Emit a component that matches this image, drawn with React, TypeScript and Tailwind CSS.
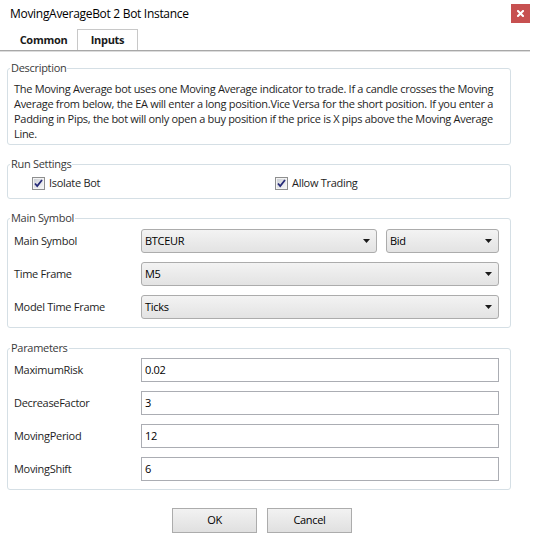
import type { ReactNode } from "react";

const font = { fontFamily: "'Open Sans', 'Noto Sans', sans-serif" };

export default function App() {
  return (
    <div
      className="w-[533px] h-[538px] bg-white text-[11px] tracking-[-0.3px] text-[#1e1e1e] overflow-hidden"
      style={font}
    >
      <TitleBar />
      <Tabs />
      <div className="pl-[7px] pr-[22px]">
        <Group legend="Description" className="mt-[10px]">
          <p className="px-[6px] pt-[6px] pb-[3px] leading-[15px] whitespace-nowrap">
            The Moving Average bot uses one Moving Average indicator to trade. If a candle crosses the Moving
            <br />
            Average from below, the EA will enter a long position.Vice Versa for the short position. If you enter a
            <br />
            Padding in Pips, the bot will only open a buy position if the price is X pips above the Moving Average
            <br />
            Line.
          </p>
        </Group>

        <Group legend="Run Settings" className="mt-[12px]">
          <div className="flex h-[16px] items-center pl-[24px] mt-[4px] mb-[7px]">
            <div className="w-[243px]">
              <Check label="Isolate Bot" />
            </div>
            <Check label="Allow Trading" />
          </div>
        </Group>

        <Group legend="Main Symbol" className="mt-[12px]">
          <div className="grid gap-[9px] pl-[6px] pr-[11px] pt-[4px] pb-[8px]">
            <Row label="Main Symbol">
              <div className="flex gap-[9px]">
                <Combo value="BTCEUR" className="w-[236px]" />
                <Combo value="Bid" className="flex-1" />
              </div>
            </Row>
            <Row label="Time Frame">
              <Combo value="M5" />
            </Row>
            <Row label="Model Time Frame">
              <Combo value="Ticks" />
            </Row>
          </div>
        </Group>

        <Group legend="Parameters" className="mt-[13px]">
          <div className="grid gap-[9px] pl-[6px] pr-[11px] pt-[3px] pb-[8px]">
            <Row label="MaximumRisk">
              <TextBox value="0.02" />
            </Row>
            <Row label="DecreaseFactor">
              <TextBox value="3" />
            </Row>
            <Row label="MovingPeriod">
              <TextBox value="12" />
            </Row>
            <Row label="MovingShift">
              <TextBox value="6" />
            </Row>
          </div>
        </Group>
      </div>

      <div className="flex gap-[10px] pl-[172px] mt-[18px]">
        <Button>OK</Button>
        <Button>Cancel</Button>
      </div>
    </div>
  );
}

function TitleBar() {
  return (
    <div className="flex h-[29px] items-start justify-between pl-[10px] pr-[3px]">
      <span className="mt-[5px] text-[12px] text-black">MovingAverageBot 2 Bot Instance</span>
      <button type="button" className="mt-[4px] flex h-[19px] w-[19px] items-center justify-center bg-[#c75050]">
        <svg width="7" height="7" viewBox="0 0 7 7">
          <path d="M1 1 L6 6 M6 1 L1 6" stroke="#fff" strokeWidth="2" strokeLinecap="square" />
        </svg>
      </button>
    </div>
  );
}

function Tabs() {
  return (
    <div className="relative flex h-[22px] pl-[10px] border-b border-[#a8a8a8] shadow-[0_1px_0_#dcdcdc] mr-[3px]">
      <div className="flex w-[67px] items-center justify-center pt-[2px] text-[11px] font-bold text-[#1a1a1a]">Common</div>
      <div className="flex w-[61px] items-center justify-center border border-b-0 border-[#c8c8c8] bg-white pt-[1px] text-[11px] font-bold text-[#1a1a1a]">
        Inputs
      </div>
    </div>
  );
}

function Group({ legend, className, children }: { legend: string; className?: string; children: ReactNode }) {
  return (
    <fieldset className={`min-w-0 rounded-[3px] border border-[#d5dfe5] ${className ?? ""}`}>
      <legend className="ml-[2px] px-[1px] leading-[14px] text-[#3a3a3a]">{legend}</legend>
      {children}
    </fieldset>
  );
}

function Row({ label, children }: { label: string; children: ReactNode }) {
  return (
    <div className="grid grid-cols-[127px_1fr] items-center">
      <span>{label}</span>
      {children}
    </div>
  );
}

function Combo({ value, className }: { value: string; className?: string }) {
  return (
    <div
      className={`flex h-[24px] items-center justify-between rounded-[3px] border border-[#acacac] bg-gradient-to-b from-[#f3f3f3] to-[#e3e3e3] pl-[3px] pr-[6px] text-black ${className ?? ""}`}
    >
      <span>{value}</span>
      <svg width="7" height="4" viewBox="0 0 7 4">
        <path d="M0 0 H7 L3.5 4 Z" fill="#1a1a1a" />
      </svg>
    </div>
  );
}

function TextBox({ value }: { value: string }) {
  return (
    <div className="flex h-[24px] items-center border border-[#abadb3] bg-white pl-[3px] text-black">{value}</div>
  );
}

function Check({ label }: { label: string }) {
  return (
    <label className="flex items-center gap-[4px]">
      <svg width="13" height="13" viewBox="0 0 13 13">
        <defs>
          <linearGradient id="cb" x1="0" y1="0" x2="1" y2="1">
            <stop offset="0" stopColor="#cdd0d6" />
            <stop offset="1" stopColor="#f7f7f7" />
          </linearGradient>
        </defs>
        <rect x="0.5" y="0.5" width="12" height="12" fill="#f4f4f4" stroke="#8e8f8f" />
        <rect x="2" y="2" width="9" height="9" fill="url(#cb)" />
        <path d="M3 6.5 L5.2 9 L10 3" fill="none" stroke="#262a78" strokeWidth="1.8" />
      </svg>
      <span>{label}</span>
    </label>
  );
}

function Button({ children }: { children: ReactNode }) {
  return (
    <button
      type="button"
      className="h-[25px] w-[85px] border border-[#acacac] bg-gradient-to-b from-[#f2f2f2] to-[#e0e0e0] text-[11px] text-black"
    >
      {children}
    </button>
  );
}
